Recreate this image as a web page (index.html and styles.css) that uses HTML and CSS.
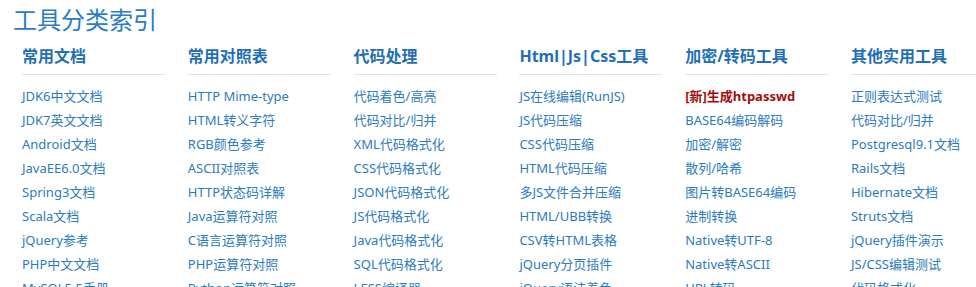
FILE: index.html
```html
<!DOCTYPE html>
<html lang="zh-CN">
<head>
  <meta charset="UTF-8">
  <title>工具分类索引</title>
  <link rel="stylesheet" href="styles.css">
</head>
<body>
  <h1 class="title">工具分类索引</h1>
  <div class="categories">
    <div class="category">
      <h3>常用文档</h3>
      <ul>
        <li><a href="#">JDK6中文文档</a></li>
        <li><a href="#">JDK7英文文档</a></li>
        <li><a href="#">Android文档</a></li>
        <li><a href="#">JavaEE6.0文档</a></li>
        <li><a href="#">Spring3文档</a></li>
        <li><a href="#">Scala文档</a></li>
        <li><a href="#">jQuery参考</a></li>
        <li><a href="#">PHP中文文档</a></li>
        <li><a href="#">MySQL5.5手册</a></li>
      </ul>
    </div>
    <div class="category">
      <h3>常用对照表</h3>
      <ul>
        <li><a href="#">HTTP Mime-type</a></li>
        <li><a href="#">HTML转义字符</a></li>
        <li><a href="#">RGB颜色参考</a></li>
        <li><a href="#">ASCII对照表</a></li>
        <li><a href="#">HTTP状态码详解</a></li>
        <li><a href="#">Java运算符对照</a></li>
        <li><a href="#">C语言运算符对照</a></li>
        <li><a href="#">PHP运算符对照</a></li>
        <li><a href="#">Python运算符对照</a></li>
      </ul>
    </div>
    <div class="category">
      <h3>代码处理</h3>
      <ul>
        <li><a href="#">代码着色/高亮</a></li>
        <li><a href="#">代码对比/归并</a></li>
        <li><a href="#">XML代码格式化</a></li>
        <li><a href="#">CSS代码格式化</a></li>
        <li><a href="#">JSON代码格式化</a></li>
        <li><a href="#">JS代码格式化</a></li>
        <li><a href="#">Java代码格式化</a></li>
        <li><a href="#">SQL代码格式化</a></li>
        <li><a href="#">LESS编译器</a></li>
      </ul>
    </div>
    <div class="category">
      <h3>Html|Js|Css工具</h3>
      <ul>
        <li><a href="#">JS在线编辑(RunJS)</a></li>
        <li><a href="#">JS代码压缩</a></li>
        <li><a href="#">CSS代码压缩</a></li>
        <li><a href="#">HTML代码压缩</a></li>
        <li><a href="#">多JS文件合并压缩</a></li>
        <li><a href="#">HTML/UBB转换</a></li>
        <li><a href="#">CSV转HTML表格</a></li>
        <li><a href="#">jQuery分页插件</a></li>
        <li><a href="#">jQuery语法着色</a></li>
      </ul>
    </div>
    <div class="category">
      <h3>加密/转码工具</h3>
      <ul>
        <li><a href="#" class="new">[新]生成htpasswd</a></li>
        <li><a href="#">BASE64编码解码</a></li>
        <li><a href="#">加密/解密</a></li>
        <li><a href="#">散列/哈希</a></li>
        <li><a href="#">图片转BASE64编码</a></li>
        <li><a href="#">进制转换</a></li>
        <li><a href="#">Native转UTF-8</a></li>
        <li><a href="#">Native转ASCII</a></li>
        <li><a href="#">URL转码</a></li>
      </ul>
    </div>
    <div class="category">
      <h3>其他实用工具</h3>
      <ul>
        <li><a href="#">正则表达式测试</a></li>
        <li><a href="#">代码对比/归并</a></li>
        <li><a href="#">Postgresql9.1文档</a></li>
        <li><a href="#">Rails文档</a></li>
        <li><a href="#">Hibernate文档</a></li>
        <li><a href="#">Struts文档</a></li>
        <li><a href="#">jQuery插件演示</a></li>
        <li><a href="#">JS/CSS编辑测试</a></li>
        <li><a href="#">代码格式化</a></li>
      </ul>
    </div>
  </div>
</body>
</html>
```

FILE: styles.css
```css
body {
  margin: 0;
  font-family: 'Noto Sans', 'Noto Sans CJK SC', sans-serif;
  background: #fff;
  overflow: hidden;
}

.title {
  margin: 4px 0 0 13px;
  font-size: 24px;
  line-height: 32px;
  font-weight: normal;
  color: #2a7cc4;
}

.categories {
  display: grid;
  grid-template-columns: repeat(6, 143px);
  column-gap: 22.8px;
  padding-left: 22px;
  margin-top: 8px;
  width: 1100px;
}

.category h3 {
  margin: 0;
  font-size: 16px;
  line-height: 24px;
  font-weight: bold;
  color: #1f6fb5;
  padding-bottom: 6px;
  border-bottom: 1px solid #e3e3e3;
}

.category ul {
  list-style: none;
  margin: 9px 0 0;
  padding: 0;
}

.category li {
  font-size: 13px;
  line-height: 24px;
  white-space: nowrap;
}

.category a {
  color: #2b7bbd;
  text-decoration: none;
}

.category a.new {
  color: #a50d0d;
  font-weight: bold;
}
```
